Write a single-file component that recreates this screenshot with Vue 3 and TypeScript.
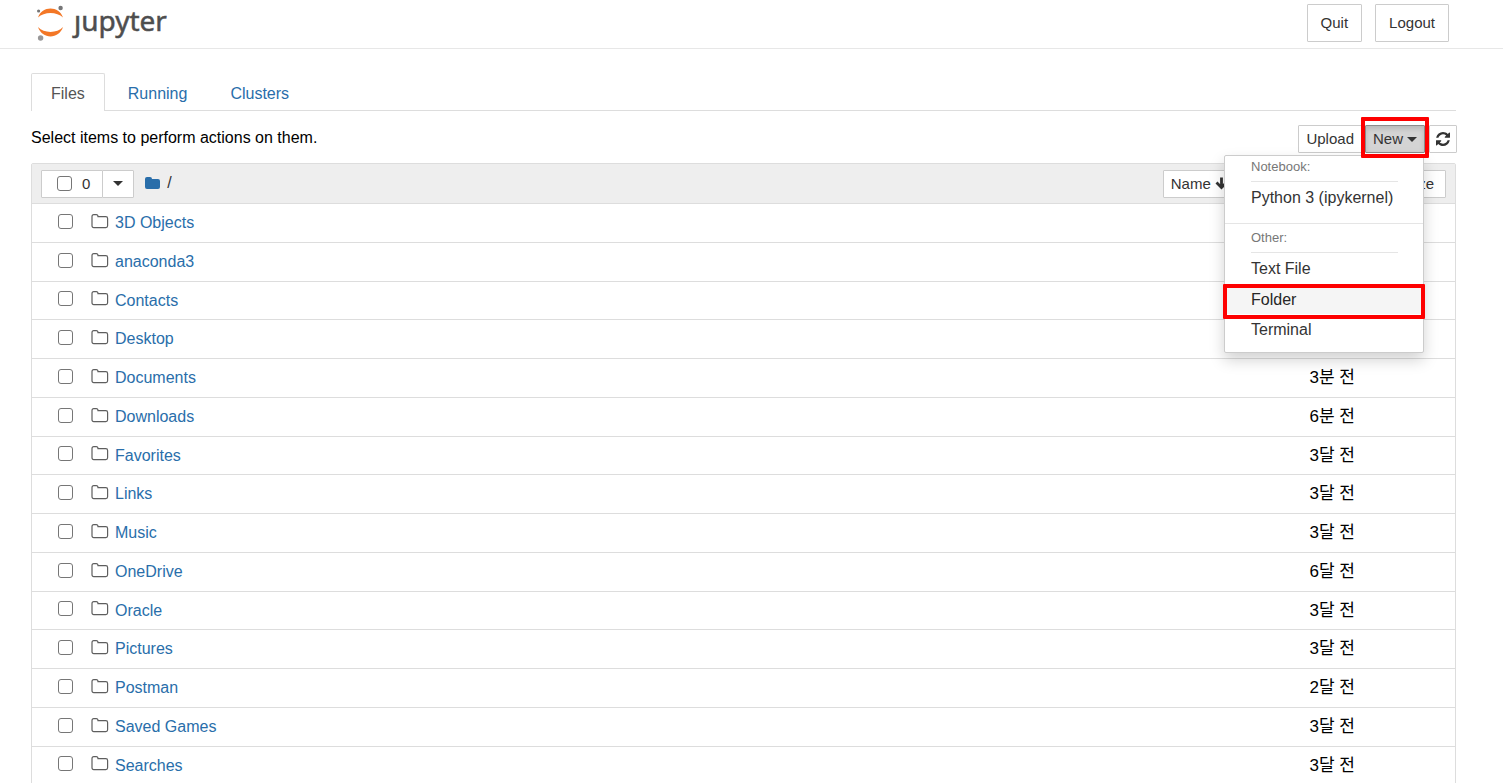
<script setup lang="ts">
import { ref } from 'vue'

interface Entry {
  name: string
  modified: string
}

const tabs = ['Files', 'Running', 'Clusters']
const activeTab = ref('Files')

const entries: Entry[] = [
  { name: '3D Objects', modified: '3달 전' },
  { name: 'anaconda3', modified: '3달 전' },
  { name: 'Contacts', modified: '3달 전' },
  { name: 'Desktop', modified: '3달 전' },
  { name: 'Documents', modified: '3분 전' },
  { name: 'Downloads', modified: '6분 전' },
  { name: 'Favorites', modified: '3달 전' },
  { name: 'Links', modified: '3달 전' },
  { name: 'Music', modified: '3달 전' },
  { name: 'OneDrive', modified: '6달 전' },
  { name: 'Oracle', modified: '3달 전' },
  { name: 'Pictures', modified: '3달 전' },
  { name: 'Postman', modified: '2달 전' },
  { name: 'Saved Games', modified: '3달 전' },
  { name: 'Searches', modified: '3달 전' },
]
</script>

<template>
  <div class="page">
    <header class="topbar">
      <a class="logo" href="#" aria-label="jupyter">
        <svg width="136" height="44" viewBox="0 0 136 44">
          <path d="M5 17.500C9 5.500 26 5.500 30 17.500C24 11.500 11 11.500 5 17.500Z" fill="#f37726" />
          <path d="M5 27C9 39.500 26 39.500 30 27C24 33.500 11 33.500 5 27Z" fill="#f37726" />
          <circle cx="27.600" cy="8" r="2.200" fill="#767677" />
          <circle cx="5.600" cy="11" r="1.600" fill="#767677" />
          <circle cx="7.600" cy="38" r="2.700" fill="#989798" />
          <text class="wordmark" x="41" y="31">jupyter</text>
          <rect x="38" y="4" width="11" height="10" fill="#fff" />
        </svg>
      </a>
      <div class="session">
        <button type="button" class="btn btn-large">Quit</button>
        <button type="button" class="btn btn-large">Logout</button>
      </div>
    </header>

    <main class="content">
      <nav class="tabs">
        <a
          v-for="tab in tabs"
          :key="tab"
          href="#"
          class="tab"
          :class="{ active: tab === activeTab }"
          @click.prevent="activeTab = tab"
        >{{ tab }}</a>
      </nav>

      <div class="toolbar">
        <span>Select items to perform actions on them.</span>
        <div class="actions">
          <button type="button" class="btn">Upload</button>
          <div class="new-group">
            <button type="button" class="btn pressed">New<i class="caret"></i></button>
            <div class="menu">
              <div class="menu-title">Notebook:</div>
              <a href="#" class="menu-item kernel">Python 3 (ipykernel)</a>
              <hr class="divider" />
              <div class="menu-title">Other:</div>
              <a href="#" class="menu-item">Text File</a>
              <a href="#" class="menu-item hovered">Folder</a>
              <a href="#" class="menu-item">Terminal</a>
            </div>
          </div>
          <button type="button" class="btn refresh" aria-label="Refresh">
            <svg width="14" height="14" viewBox="0 0 1536 1536" fill="currentColor">
              <path d="M1511 928q0 5-1 7-64 268-268 434.500T764 1536q-146 0-282.500-55T238 1324l-129 129q-19 19-45 19t-45-19-19-45V960q0-26 19-45t45-19h448q26 0 45 19t19 45-19 45l-137 137q71 66 161 102t187 36q134 0 250-65t186-179q11-17 53-117 8-23 30-23h192q13 0 22.500 9.500t9.500 22.500zm25-800v448q0 26-19 45t-45 19h-448q-26 0-45-19t-19-45 19-45l138-138Q969 256 768 256q-134 0-250 65T332 500q-11 17-53 117-8 23-30 23H50q-13 0-22.500-9.500T18 608v-7q65-268 270-434.500T768 0q146 0 284 55.500T1297 212l130-129q19-19 45-19t45 19 19 45z" />
            </svg>
          </button>
        </div>
      </div>

      <section class="list">
        <div class="list-head">
          <div class="select-group">
            <label class="btn select-all"><input type="checkbox" class="box" /><span>0</span></label>
            <button type="button" class="btn select-more" aria-label="Select type"><i class="caret"></i></button>
          </div>
          <div class="crumbs">
            <a href="#" aria-label="Home">
              <svg width="15" height="12" viewBox="0 0 15 12"><path d="M0 2Q0 0 2 0H5Q7 0 7 2H13Q15 2 15 4V10Q15 12 13 12H2Q0 12 0 10Z" fill="#296eaa" /></svg>
            </a>
            <span>/</span>
          </div>
          <div class="sorts">
            <button type="button" class="btn sort-name">Name
              <svg width="13" height="13" viewBox="0 0 13 13"><path d="M6.500 0.500V11M1.500 5.500L6.500 10.500L11.500 5.500" fill="none" stroke="currentColor" stroke-width="2.800" /></svg>
            </button>
            <button type="button" class="btn">Last Modified</button>
            <button type="button" class="btn sort-size">File size</button>
          </div>
        </div>

        <div v-for="entry in entries" :key="entry.name" class="row">
          <input type="checkbox" class="box" :aria-label="entry.name" />
          <svg class="folder" width="18" height="15" viewBox="0 0 18 15"><path d="M1 2.500Q1 0.700 2.800 0.700H5.200Q7 0.700 7 2.700H14.800Q16.600 2.700 16.600 4.500V11.800Q16.600 13.600 14.800 13.600H2.800Q1 13.600 1 11.800Z" fill="none" stroke="#5e5e5e" stroke-width="1.200" /></svg>
          <a href="#" class="name">{{ entry.name }}</a>
          <span class="modified">{{ entry.modified }}</span>
        </div>
      </section>
    </main>
  </div>
</template>

<style>
body {
  margin: 0;
}
</style>

<style scoped>
.page {
  height: 100vh;
  overflow: hidden;
  background: #fff;
  color: #000;
  font: 16px/22px "Liberation Sans", Arial, "Noto Sans CJK KR", sans-serif;
}
.page * {
  box-sizing: border-box;
}
a {
  color: #296eaa;
  text-decoration: none;
}
.topbar {
  display: flex;
  justify-content: space-between;
  height: 49px;
  padding: 0 54px 0 33px;
  border-bottom: 1px solid #e7e7e7;
}
.logo svg {
  display: block;
}
.wordmark {
  font: 28px "Noto Sans", sans-serif;
  fill: #4e4e4e;
  stroke: #4e4e4e;
  stroke-width: 0.5px;
}
.session {
  display: flex;
  gap: 13px;
  padding-top: 4px;
}
.btn {
  display: inline-flex;
  align-items: center;
  height: 28px;
  padding: 0 7px;
  border: 1px solid #ccc;
  border-radius: 1px;
  background: #fff;
  color: #333;
  font: inherit;
  font-size: 15px;
  white-space: nowrap;
}
.btn-large {
  height: 38px;
  padding: 0 13px;
}
.content {
  padding: 24px 47px 0 31px;
}
.tabs {
  display: flex;
  gap: 3px;
  border-bottom: 1px solid #ddd;
}
.tab {
  height: 37px;
  padding: 9px 19px 0;
  border: 1px solid transparent;
  border-bottom: 0;
  border-radius: 2px 2px 0 0;
}
.tab.active {
  height: 38px;
  margin-bottom: -1px;
  border-color: #ddd;
  background: #fff;
  color: #555;
}
.toolbar {
  display: flex;
  justify-content: space-between;
  height: 52px;
  padding-top: 14px;
}
.toolbar > span {
  line-height: 26px;
}
.actions {
  display: flex;
  align-items: flex-start;
  margin-right: -1px;
}
.new-group {
  position: relative;
  margin: 0 4px 0 3px;
}
.new-group::after,
.hovered::after {
  content: "";
  position: absolute;
  z-index: 3;
  border: 4px solid #fe0000;
  border-radius: 1px;
  pointer-events: none;
}
.new-group::after {
  inset: -8px -4px -5px -4px;
}
.hovered::after {
  inset: 0 -2px -5px -2px;
}
.btn.pressed {
  border-color: #8c8c8c;
  background: #d4d4d4;
  box-shadow: inset 0 3px 5px rgba(0, 0, 0, 0.13);
}
.caret {
  border: 5px solid transparent;
  border-top-color: currentColor;
  border-bottom: 0;
}
.pressed .caret {
  margin-left: 4px;
}
.refresh {
  padding: 0 6px;
}
.menu {
  position: absolute;
  z-index: 2;
  top: 30px;
  right: 1px;
  width: 200px;
  padding-bottom: 7px;
  border: 1px solid #ccc;
  border-radius: 2px;
  background: #fff;
  box-shadow: 0 7px 15px rgba(0, 0, 0, 0.18);
}
.menu-title {
  height: 26px;
  margin: 0 25px 0 26px;
  border-bottom: 1px solid #e5e5e5;
  color: #777;
  font-size: 13px;
}
.menu-item {
  position: relative;
  display: block;
  height: 31px;
  padding: 5px 26px 0;
  color: #333;
}
.menu-item.kernel {
  height: 41px;
}
.menu-item.hovered {
  height: 30px;
  background: #f5f5f5;
  color: #262626;
}
.divider {
  height: 1px;
  margin: 0 0 3px;
  border: 0;
  background: #e5e5e5;
}
.list {
  border: 1px solid #ddd;
  border-radius: 2px;
}
.list-head {
  display: flex;
  align-items: center;
  height: 40px;
  padding: 0 9px;
  border-bottom: 1px solid #ddd;
  background: #eee;
}
.select-group {
  display: flex;
}
.box {
  width: 15px;
  height: 15px;
  margin: 0;
  border: 1px solid #767676;
  border-radius: 3px;
  background: #fff;
  appearance: none;
}
.select-all {
  gap: 10px;
  padding: 0 12px 0 15px;
}
.select-more {
  margin-left: -1px;
  padding: 0 10px;
}
.crumbs {
  display: flex;
  align-items: center;
  gap: 7px;
  padding: 0 0 2px 11px;
  color: #333;
}
.crumbs svg {
  display: block;
}
.sorts {
  display: flex;
  gap: 15px;
  margin-left: auto;
}
.sort-name {
  gap: 4px;
}
.sort-size {
  padding-right: 11px;
}
.row {
  display: flex;
  align-items: center;
  height: 39px;
  padding: 0 100px 0 26px;
  border-bottom: 1px solid #ddd;
}
.row:nth-child(4n) {
  height: 38px;
}
.row .box {
  margin-bottom: 4px;
}
.folder {
  margin: 0 6px 4px 18px;
}
.modified {
  margin-left: auto;
  font-size: 17px;
}
</style>
